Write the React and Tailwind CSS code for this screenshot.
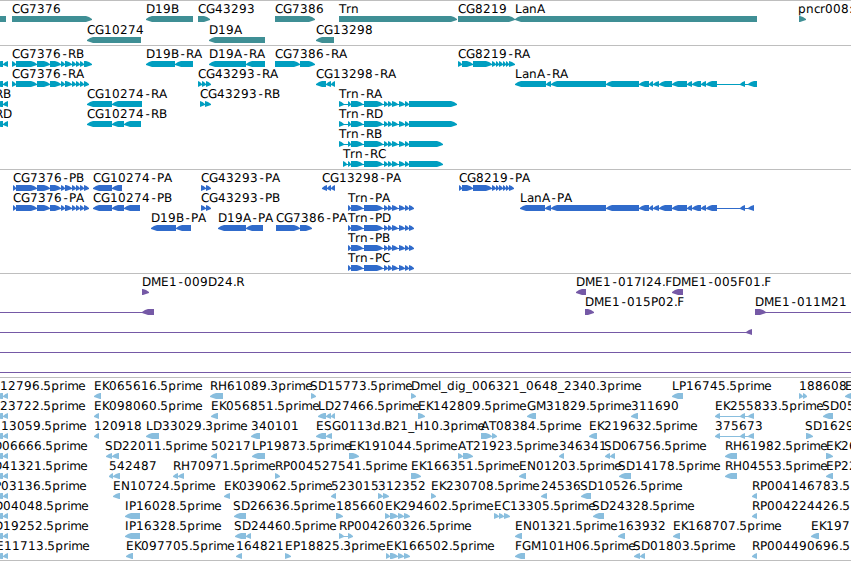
import React from 'react';

const WIDTH = 851;

// Horizontal advance of each glyph at 12px
const ADVANCE = {
  C: 8, G: 9, D: 9, M: 10, H: 9, R: 8, A: 8, B: 8, P: 7, E: 8, K: 7, S: 8, F: 7, L: 7, T: 7, N: 9, I: 4,
  a: 7, c: 6, d: 8, e: 7, g: 8, i: 3, l: 3, m: 11, n: 8, p: 8, r: 5,
  '-': 7, '.': 3.25, _: 6, ':': 4,
};

const glyphPositions = (text, start) => {
  let x = start;
  return [...text].map((ch) => {
    // hyphens sit in the middle of their cell
    const current = ch === '-' ? x + 1.5 : x;
    x += ADVANCE[ch] || 8;
    return current;
  }).join(' ');
};

// f(label, direction, exons, labelX)
const f = (label, dir, exons, labelX) => ({ label, dir, exons, labelX: labelX ?? exons[0][0] });
const edge = (label, labelX) => f(label, 'l', [[-5, 3], [3, 8]], labelX);

const cg7376 = (start, end) => [[start, 16], [16, 37], [37, 50], [50, 61], [61, 65], [65, 72], [72, 76], [76, 80], [80, 84], [84, end]];
const cg8219 = (start, end) => [[start, 462], [462, 473], [473, 492], [492, 496], [496, 499], [499, 503], [503, 506], [506, 509], [509, end]];
const trn = (first, end) => [...first, [351, 363], [364, 383], [384, 388], [388, 392], [392, 398], [399, 405], [405, 409], [409, end]];
const lanA = (start, mid, end) => [
  [start, mid], [mid, 551], [551, 606], [606, 639], [639, 649], [649, 653], [653, 659], [659, 672], [672, 687],
  [687, 692], [692, 701], [701, 706], [706, 717], [740, 745], [748, end],
];
const trnCds = trn([[348, 351]], 414);
const spliced = [[715, 720], [740, 745], [748, 754]];
const ek29 = (start) => [[start, 390], [390, 398], [398, 404], [404, 410]];

const genes = [
  [
    f('', 'l', [[-20, 6]]),
    f('CG7376', 'r', [[12, 92]]),
    f('D19B', 'l', [[146, 193]]),
    f('CG43293', 'r', [[198, 210]]),
    f('CG7386', 'r', [[275, 315]]),
    f('Trn', 'r', [[339, 457]]),
    f('CG8219', 'r', [[458, 515]]),
    f('LanA', 'l', [[515, 757]]),
    f('pncr008:', 'r', [[799, 806]], 798),
  ],
  [
    f('CG10274', 'l', [[87, 141]]),
    f('D19A', 'l', [[209, 265]]),
    f('CG13298', 'l', [[316, 334]]),
  ],
];

const transcripts = [
  [
    edge(''),
    f('CG7376-RB', 'r', cg7376(12, 92)),
    f('D19B-RA', 'l', [[146, 175], [175, 193]]),
    f('D19A-RA', 'l', [[209, 246], [246, 265]]),
    f('CG7386-RA', 'r', [[275, 300], [300, 315]]),
    f('CG8219-RA', 'r', cg8219(458, 515)),
  ],
  [
    edge(''),
    f('CG7376-RA', 'r', cg7376(12, 89)),
    f('CG43293-RA', 'r', [[198, 202], [202, 206], [206, 211]]),
    f('CG13298-RA', 'l', [[316, 326], [326, 331], [331, 335]]),
    f('LanA-RA', 'l', lanA(515, 546, 757)),
  ],
  [
    edge('RB', -5),
    f('CG10274-RA', 'l', [[87, 112], [112, 142]]),
    f('CG43293-RB', 'r', [[200, 205], [205, 211]]),
    f('Trn-RA', 'r', trn([[339, 344], [348, 351]], 457)),
  ],
  [
    edge('RD', -5),
    f('CG10274-RB', 'l', [[87, 112], [112, 124], [124, 141]]),
    f('Trn-RD', 'r', trn([[339, 344], [348, 351]], 457)),
  ],
  [f('Trn-RB', 'r', trn([[339, 344], [348, 351]], 443))],
  [f('Trn-RC', 'r', trn([[343, 347], [348, 351]], 443))],
];

const proteins = [
  [
    f('CG7376-PB', 'r', cg7376(13, 89)),
    f('CG10274-PA', 'l', [[93, 112], [112, 122]]),
    f('CG43293-PA', 'r', [[201, 206], [206, 211]]),
    f('CG13298-PA', 'l', [[322, 327], [327, 331], [331, 335]]),
    f('CG8219-PA', 'r', cg8219(459, 514)),
  ],
  [
    f('CG7376-PA', 'r', cg7376(13, 89)),
    f('CG10274-PB', 'l', [[93, 112], [112, 124], [124, 140]]),
    f('CG43293-PB', 'r', [[201, 206], [206, 211]]),
    f('Trn-PA', 'r', trnCds),
    f('LanA-PA', 'l', lanA(520, 545, 754)),
  ],
  [
    f('D19B-PA', 'l', [[151, 176], [176, 191]]),
    f('D19A-PA', 'l', [[218, 246], [246, 263]]),
    f('CG7386-PA', 'r', [[276, 300], [300, 312]]),
    f('Trn-PD', 'r', trnCds),
  ],
  [f('Trn-PB', 'r', trnCds)],
  [f('Trn-PC', 'r', trnCds)],
];

const clones = [
  [
    f('DME1-009D24.R', 'r', [[142, 149]]),
    f('DME1-017I24.F', 'l', [[576, 586]]),
    f('DME1-005F01.F', 'l', [[672, 683]]),
  ],
  [
    f('', 'l', [[-20, -10], [142, 154]]),
    f('DME1-015P02.F', 'r', [[585, 594]]),
    f('DME1-011M21', 'r', [[755, 766], [860, 870]]),
  ],
  [f('', 'l', [[-20, -10], [746, 752]])],
  [f('', 'l', [[-20, -10], [860, 870]])],
  [f('', 'l', [[-20, -10], [860, 870]])],
];

const ests = [
  [
    edge('12796.5prime', 0),
    f('EK065616.5prime', 'l', [[94, 101]]),
    f('RH61089.3prime', 'l', [[210, 223]]),
    f('SD15773.5prime', 'r', [[311, 316]], 310),
    f('Dmel_dig_006321_0648_2340.3prime', 'r', [[411, 416]]),
    f('LP16745.5prime', 'l', [[672, 683]]),
    f('188608', 'r', [[799, 803], [803, 807]]),
    f('E', 'l', [[845, 857]]),
  ],
  [
    edge('23722.5prime', 0),
    f('EK098060.5prime', 'l', [[94, 99]]),
    f('EK056851.5prime', 'l', [[211, 218]]),
    f('LD27466.5prime', 'l', [[318, 326], [326, 331], [331, 335]]),
    f('EK142809.5prime', 'r', [[418, 425]]),
    f('GM31829.5prime', 'l', [[527, 536]]),
    f('311690', 'l', [[631, 638]]),
    f('EK255833.5prime', 'l', spliced),
    f('SD05', 'l', [[823, 833]], 822),
  ],
  [
    edge('13059.5prime', 1),
    f('120918', 'l', [[94, 99]]),
    f('LD33029.3prime', 'l', [[146, 159]]),
    f('340101', 'l', [[251, 260]]),
    f('ESG0113d.B21_H10.3prime', 'l', [[316, 326], [326, 332]]),
    f('AT08384.5prime', 'r', [[481, 492], [492, 497]]),
    f('EK219632.5prime', 'l', [[589, 597]]),
    f('375673', 'l', spliced),
    f('SD1629', 'r', [[806, 813]], 805),
  ],
  [
    edge('D06666.5prime', -7),
    f('SD22011.5prime', 'l', [[106, 112], [112, 119]], 105),
    f('50217', 'l', [[211, 217]]),
    f('LP19873.5prime', 'l', [[252, 265]]),
    f('EK191044.5prime', 'r', [[349, 359]]),
    f('AT21923.5prime', 'r', [[458, 463], [463, 473]]),
    f('346341', 'l', [[559, 564]]),
    f('SD06756.5prime', 'l', [[605, 610], [610, 615]], 604),
    f('RH61982.5prime', 'l', [[725, 737]]),
    f('EK26', 'r', [[826, 833]]),
  ],
  [
    edge('D41321.5prime', -7),
    f('542487', 'l', [[109, 113], [113, 120]]),
    f('RH70971.5prime', 'l', [[173, 178], [178, 184]]),
    f('RP004527541.5prime', 'r', [[275, 280]]),
    f('EK166351.5prime', 'r', [[411, 421]]),
    f('EN01203.5prime', 'l', [[519, 526]]),
    f('SD14178.5prime', 'l', [[619, 631]], 618),
    f('RH04553.5prime', 'l', [[725, 737]]),
    f('EP22', 'l', [[826, 833]]),
  ],
  [
    edge('P03136.5prime', -6),
    f('EN10724.5prime', 'l', [[113, 120]]),
    f('EK039062.5prime', 'l', [[224, 230]]),
    f('523015', 'l', [[331, 336]]),
    f('312352', 'r', [[378, 383], [383, 389]]),
    f('EK230708.5prime', 'r', [[431, 436]]),
    f('24536', 'l', [[541, 547]]),
    f('SD10526.5prime', 'l', [[581, 591]], 580),
    f('RP004146783.5', 'l', [[752, 757]]),
  ],
  [
    edge('D04048.5prime', -6),
    f('IP16028.5prime', 'l', [[125, 140]]),
    f('SD26636.5prime', 'l', [[234, 246]], 233),
    f('185660', 'r', [[336, 343]]),
    f('EK294602.5prime', 'r', ek29(385)),
    f('EC13305.5prime', 'r', [[494, 499], [499, 504], [504, 510]]),
    f('SD24328.5prime', 'l', [[593, 604]], 592),
    f('RP004224426.5', 'l', [[752, 757]]),
  ],
  [
    edge('D19252.5prime', -6),
    f('IP16328.5prime', 'l', [[125, 140]]),
    f('SD24460.5prime', 'l', [[235, 246], [246, 251]], 234),
    f('RP004260326.5prime', 'r', [[339, 344], [348, 353]]),
    f('EN01321.5prime', 'l', [[515, 522]]),
    f('163932', 'l', [[618, 625]]),
    f('EK168707.5prime', 'l', [[673, 680]]),
    f('EK197', 'l', [[811, 819]]),
  ],
  [
    edge('E11713.5prime', -4),
    f('EK097705.5prime', 'l', [[126, 133]]),
    f('164821', 'l', [[236, 242]]),
    f('EP18825.3prime', 'r', [[285, 291]]),
    f('EK166502.5prime', 'r', ek29(386)),
    f('FGM101H06.5prime', 'l', [[515, 525]]),
    f('SD01803.5prime', 'l', [[634, 640], [640, 645]], 633),
    f('RP004490696.5', 'l', [[752, 757]]),
  ],
];

// Arrow-shaped block, 6px tall, with a slightly convex head
const exonPoints = (x0, x1, dir) => {
  const head = Math.min(6, x1 - x0);
  const mid = head * 0.5;
  return dir === 'r'
    ? `${x0},15 ${x1 - head},15 ${x1 - mid},16 ${x1},18 ${x1},19 ${x1 - mid},20 ${x1 - head},21 ${x0},21`
    : `${x1},15 ${x0 + head},15 ${x0 + mid},16 ${x0},18 ${x0},19 ${x0 + mid},20 ${x0 + head},21 ${x1},21`;
};

const Feature = ({ label, dir, exons, labelX }) => {
  const start = exons[0][0];
  const end = exons[exons.length - 1][1];
  return (
    <g>
      {exons.length > 1 && <rect x={start} y="18" width={end - start} height="1" />}
      {exons.map(([x0, x1]) => (
        <polygon key={x0} points={exonPoints(x0, x1, dir)} />
      ))}
      {label && (
        <text x={glyphPositions(label, labelX)} y="12" className="fill-black text-[12px]">{label}</text>
      )}
    </g>
  );
};

const Track = ({ rows, color, height, rowHeight = 20 }) => (
  <section className={`flex flex-col border-t border-[#bebebe] ${height} ${color}`}>
    {rows.map((row, i) => (
      <svg
        key={i}
        width={WIDTH}
        height={rowHeight}
        textRendering="geometricPrecision"
        className="block shrink-0 overflow-visible fill-current"
      >
        {row.map((feature, j) => <Feature key={j} {...feature} />)}
      </svg>
    ))}
  </section>
);

const App = () => {
  return (
    <main className="w-[851px] h-[561px] overflow-hidden bg-white border-b border-[#bebebe] font-['DejaVu_Sans',sans-serif]">
      <Track rows={genes} color="text-[#3f8f95]" height="h-[45px]" rowHeight={21} />
      <Track rows={transcripts} color="text-[#009ec0]" height="h-[124px]" />
      <Track rows={proteins} color="text-[#306bcb]" height="h-[104px]" />
      <Track rows={clones} color="text-[#7559a6]" height="h-[104px]" />
      <Track rows={ests} color="text-[#89bede]" height="h-[183px]" />
    </main>
  );
};

export default App;
